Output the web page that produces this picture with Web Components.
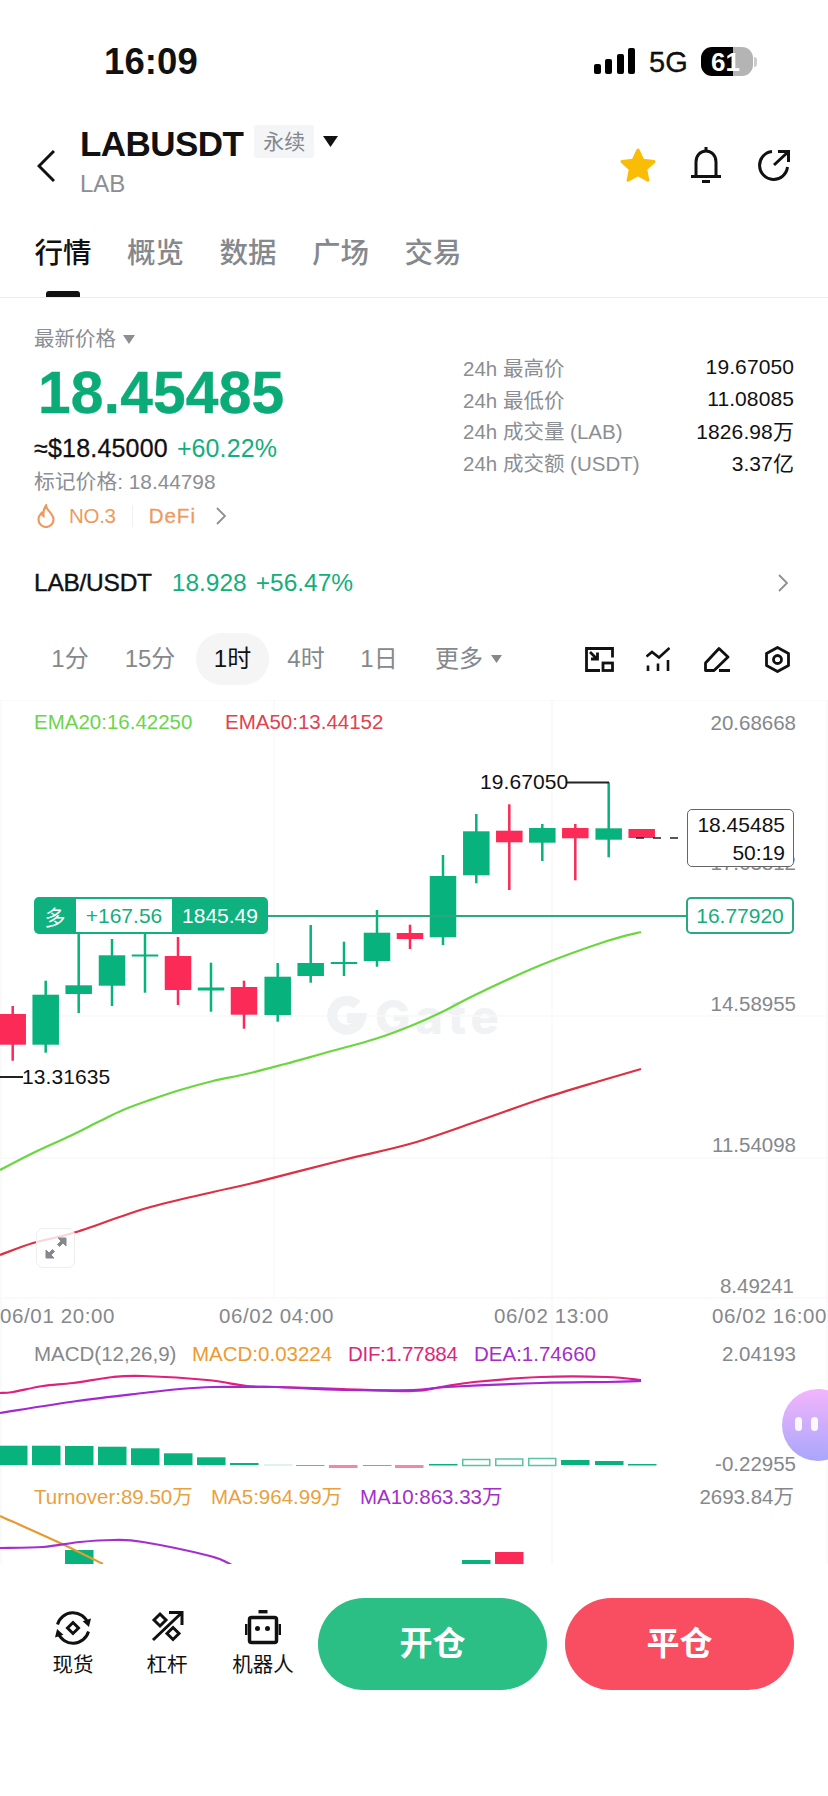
<!DOCTYPE html>
<html lang="zh">
<head>
<meta charset="utf-8">
<title>LABUSDT</title>
<style>
  html, body { margin: 0; padding: 0; background: #fff; }
  body {
    width: 828px;
    height: 1796px;
    overflow: hidden;
    position: relative;
    font-family: "Liberation Sans", "Noto Sans CJK SC", sans-serif;
    color: #111;
  }
</style>
</head>
<body>
  <status-bar time="16:09" network="5G" battery="61"></status-bar>
  <market-header symbol="LABUSDT" base="LAB" kind="永续"></market-header>
  <tab-bar tabs="行情,概览,数据,广场,交易" active="0"></tab-bar>
  <price-panel></price-panel>
  <pair-row pair="LAB/USDT" price="18.928" change="+56.47%"></pair-row>
  <interval-bar></interval-bar>
  <kline-chart></kline-chart>
  <trade-bar></trade-bar>
  <float-bubble></float-bubble>

<script>
// Status bar
class StatusBar extends HTMLElement {
  constructor() {
    super();
    this.attachShadow({ mode: 'open' });
  }
  connectedCallback() {
    const bars = [[0, 64], [11, 59], [23, 54], [34, 48]]
      .map(([x, y]) => `<rect x="${x}" y="${y - 48}" width="7" height="${74 - y}" rx="2"/>`).join('');
    this.shadowRoot.innerHTML = `
      <style>
        :host { display: flex; height: 100px; box-sizing: border-box; padding: 44px 0 0 104px; align-items: flex-start; }
        .time { font-size: 36.5px; line-height: 36px; font-weight: 700; width: 490px; letter-spacing: .1px; }
        .sig { margin-top: 4px; }
        .net { font-size: 29px; line-height: 36px; margin-left: 14px; width: 52px; -webkit-text-stroke: .3px #000; }
        .bat { position: relative; width: 52px; height: 29px; margin-top: 3px; padding-right: 3px; box-sizing: border-box; border-radius: 11px; overflow: hidden;
               background: linear-gradient(90deg, #000 62%, #b4b4b4 62%); color: #fff; font-size: 26px; font-weight: 700;
               line-height: 30px; text-align: center; }
        .cap { width: 3px; height: 10px; margin: 13px 0 0 1px; background: #ccc; border-radius: 0 3px 3px 0; }
      </style>
      <div class="time">${this.getAttribute('time')}</div>
      <svg class="sig" width="41" height="26" viewBox="0 0 41 26" fill="#000">${bars}</svg>
      <div class="net">${this.getAttribute('network')}</div>
      <div class="bat">${this.getAttribute('battery')}</div>
      <div class="cap"></div>`;
  }
}

// Symbol title with actions
class MarketHeader extends HTMLElement {
  constructor() {
    super();
    this.attachShadow({ mode: 'open' });
  }
  connectedCallback() {
    this.shadowRoot.innerHTML = `
      <style>
        :host { display: flex; height: 110px; box-sizing: border-box; padding: 24px 38px 0 37px; }
        svg { display: block; flex: none; }
        .back { margin: 26px 25px 0 0; }
        .name { display: flex; align-items: center; height: 40px; }
        .sym { font-size: 35px; line-height: 40px; font-weight: 700; letter-spacing: -.55px; }
        .tag { margin-left: 11px; width: 60px; height: 33px; margin-top: -6px; background: #f4f5f6; border-radius: 3px; color: #85888c;
               font-size: 21px; line-height: 33px; text-align: center; }
        .tri { margin: -6px 0 0 9px; }
        .base { color: #8b8e93; font-size: 24px; line-height: 30px; margin-top: 5px; }
        .acts { margin-left: auto; display: flex; align-items: center; height: 38px; margin-top: 22px; }
      </style>
      <svg class="back" width="18" height="32" viewBox="0 0 18 32" fill="none" stroke="#111" stroke-width="3"><path d="M17 1 2 16l15 15"/></svg>
      <div>
        <div class="name">
          <span class="sym">${this.getAttribute('symbol')}</span>
          <span class="tag">${this.getAttribute('kind')}</span>
          <svg class="tri" width="15" height="11" viewBox="0 0 15 11" fill="#111"><path d="M0 0h15L7.5 11z"/></svg>
        </div>
        <div class="base">${this.getAttribute('base')}</div>
      </div>
      <div class="acts">
        <svg width="36" height="34" viewBox="0 0 36 34" fill="#fbbc05" stroke="#fbbc05" stroke-width="3" stroke-linejoin="round"><path d="M18 2l4.8 10.2 11.2 1.4-8.3 7.6 2.2 11-9.9-5.5-9.9 5.5 2.2-11L2 13.600l11.200-1.400z"/></svg>
        <svg style="margin-left:35px" width="30" height="36" viewBox="0 0 30 36" fill="none" stroke="#111" stroke-width="3"><path d="M15 0v4M5 29V15C5 8.500 9.500 4 15 4s10 4.500 10 11v14M0 29.500h30M11 34.500h8"/></svg>
        <svg style="margin-left:36px" width="33" height="33" viewBox="0 0 33 33" fill="none" stroke="#111" stroke-width="3"><path d="M15 2.500A14 14 0 1 0 30.500 18M17 16 31 3M21 2.500h10.500V13"/></svg>
      </div>`;
  }
}

// Main tabs
class TabBar extends HTMLElement {
  constructor() {
    super();
    this.attachShadow({ mode: 'open' });
  }
  connectedCallback() {
    const active = Number(this.getAttribute('active'));
    const items = this.getAttribute('tabs').split(',')
      .map((t, i) => `<span class="tab${i === active ? ' on' : ''}">${t}</span>`).join('');
    this.shadowRoot.innerHTML = `
      <style>
        :host { display: flex; gap: 35.500px; height: 88px; box-sizing: border-box; padding: 23px 0 0 34.500px; border-bottom: 1px solid #ececec; }
        .tab { position: relative; font-size: 28.500px; line-height: 40px; height: 64px; color: #85888c; font-weight: 500; }
        .tab.on { color: #111; }
        .tab.on::after { content: ""; position: absolute; left: 11px; width: 34px; height: 6px; bottom: 0; background: #111; border-radius: 3px 3px 0 0; }
      </style>${items}`;
  }
}

// Latest price block and 24h stats
class PricePanel extends HTMLElement {
  constructor() {
    super();
    this.attachShadow({ mode: 'open' });
  }
  connectedCallback() {
    const stats = [
      ['24h 最高价', '19.67050'],
      ['24h 最低价', '11.08085'],
      ['24h 成交量 (LAB)', '1826.98万'],
      ['24h 成交额 (USDT)', '3.37亿'],
    ].map(([k, v]) => `<div class="k">${k}</div><div class="v">${v}</div>`).join('');
    this.shadowRoot.innerHTML = `
      <style>
        :host { display: flex; height: 235px; box-sizing: border-box; padding: 28px 34px 0; }
        .left { width: 429px; flex: none; }
        .grey { color: #8b8e93; font-size: 20.500px; }
        .label { line-height: 26px; display: flex; align-items: center; gap: 7px; }
        .big { font-size: 58.700px; line-height: 60px; margin: 11px 0 0 4px; font-weight: 700; color: #0bab78; letter-spacing: .2px; -webkit-text-stroke: .4px #0bab78; }
        .sub { font-size: 25px; line-height: 30px; margin-top: 10px; display: flex; gap: 9px; }
        .price { letter-spacing: .2px; -webkit-text-stroke: .3px #111; }
        .up { color: #14ae7d; letter-spacing: .1px; }
        .mark { line-height: 24px; margin-top: 7px; font-size: 20.800px; }
        .rank { display: flex; align-items: center; height: 30px; margin-top: 7px; color: #ee9a5e; font-size: 20.500px; }
        .rank svg { flex: none; }
        .no { letter-spacing: -.3px; }
        .fi { letter-spacing: 1px; -webkit-text-stroke: .3px #ee9a5e; }
        .sep { width: 1px; height: 22px; background: #f0f0f0; margin: 0 16px; }
        .stats { flex: 1; display: grid; grid-template-columns: 1fr auto; grid-auto-rows: 31.500px; align-items: center; padding-top: 25.500px; align-content: start; }
        .k { color: #8b8e93; font-size: 20.500px; }
        .v { font-size: 21px; text-align: right; letter-spacing: .1px; }
      </style>
      <div class="left">
        <div class="grey label">最新价格 <svg width="12" height="9" viewBox="0 0 12 9" fill="#8b8e93"><path d="M0 0h12L6 9z"/></svg></div>
        <div class="big">18.45485</div>
        <div class="sub"><span class="price">≈$18.45000</span><span class="up">+60.22%</span></div>
        <div class="grey mark">标记价格: 18.44798</div>
        <div class="rank">
          <svg style="margin:0 14px 0 3px" width="18" height="24" viewBox="0 0 18 24" fill="none" stroke="#ee9a5e" stroke-width="2.200"><path d="M9 1.500c.5 5 7.500 8 7.500 14a7.500 7.500 0 0 1-15 0c0-3 1.500-5 3-6.500.5 1.500 1 2.500 2 3C6 8 7 4.500 9 1.500z"/></svg>
          <span class="no">NO.3</span><span class="sep"></span><span class="fi">DeFi</span>
          <svg style="margin-left:20px" width="10" height="18" viewBox="0 0 10 18" fill="none" stroke="#8b8e93" stroke-width="1.800"><path d="M1 1l8 8-8 8"/></svg>
        </div>
      </div>
      <div class="stats">${stats}</div>`;
  }
}

// Spot pair link row
class PairRow extends HTMLElement {
  constructor() {
    super();
    this.attachShadow({ mode: 'open' });
  }
  connectedCallback() {
    this.shadowRoot.innerHTML = `
      <style>
        :host { display: flex; align-items: center; height: 100px; box-sizing: border-box; padding: 0 40px 0 34px; font-size: 24.500px; }
        .p { font-weight: 500; -webkit-text-stroke: .4px #111; letter-spacing: -.25px; }
        .g { color: #14ae7d; margin-left: 20px; }
        .g + .g { margin-left: 9px; }
        svg { margin-left: auto; }
      </style>
      <span class="p">${this.getAttribute('pair')}</span>
      <span class="g">${this.getAttribute('price')}</span>
      <span class="g">${this.getAttribute('change')}</span>
      <svg width="10" height="18" viewBox="0 0 10 18" fill="none" stroke="#8b8e93" stroke-width="1.800"><path d="M1 1l8 8-8 8"/></svg>`;
  }
}

// Interval selector and chart tools
class IntervalBar extends HTMLElement {
  constructor() {
    super();
    this.attachShadow({ mode: 'open' });
  }
  connectedCallback() {
    this.shadowRoot.innerHTML = `
      <style>
        :host { display: flex; height: 67px; box-sizing: border-box; padding-right: 38px; align-items: flex-start; }
        .i { height: 52px; line-height: 52px; font-size: 24px; color: #85888c; text-align: center; }
        .on { width: 73px; background: #f5f5f5; border-radius: 26px; color: #111; }
        .more { display: flex; align-items: center; gap: 8px; }
        svg { display: block; flex: none; }
        .tools { margin-left: auto; display: flex; align-items: center; height: 52px; }
      </style>
      <span class="i" style="width:70px;margin-left:35px">1分</span>
      <span class="i" style="width:52px;margin-left:19px">15分</span>
      <span class="i on" style="margin-left:20px">1时</span>
      <span class="i" style="width:40px;margin-left:17px">4时</span>
      <span class="i" style="width:38px;margin-left:34px">1日</span>
      <span class="i more" style="margin-left:37px">更多<svg width="11" height="8" viewBox="0 0 11 8" fill="#85888c"><path d="M0 0h11L5.500 8z"/></svg></span>
      <div class="tools">
        <svg width="29" height="25" viewBox="0 0 29 25" fill="none" stroke="#111" stroke-width="2.800"><path d="M15 23.500H1.500V1.500h26v9M5 5l7 7M6 12h6.500V5.500"/><rect x="18" y="16" width="9.500" height="7.500"/></svg>
        <svg style="margin-left:32px" width="24" height="25" viewBox="0 0 24 25" fill="none" stroke="#111" stroke-width="2.600"><path d="M0.500 9.500 6 5l7 5.500L23.500 1M2 18.500v5.500M12 16.500v7.500M22 13v11"/></svg>
        <svg style="margin-left:34px" width="27" height="25" viewBox="0 0 27 25" fill="none" stroke="#111" stroke-width="2.800" stroke-linejoin="round"><path d="M1.500 23.500V16L15 1.500 24 10 10 23.500zM15 23.500h11"/></svg>
        <svg style="margin-left:34px" width="25" height="27" viewBox="0 0 25 27" fill="none" stroke="#111" stroke-width="2.800" stroke-linejoin="round"><path d="M12.500 1.500 23.500 7.500v12l-11 6-11-6v-12z"/><circle cx="12.500" cy="13.500" r="4"/></svg>
      </div>`;
  }
}

// Candles, indicators and axes. The chart is a free canvas, coordinates are page pixels minus TOP.
const TOP = 700;
const GREEN = '#08b27c';
const RED = '#fb2a57';

// [centre x, body top, body bottom, wick top, wick bottom, colour]
const CANDLES = [
  [12.7, 1014, 1044.7, 1006, 1060.7, RED],
  [45.7, 994.7, 1044.7, 980.7, 1052.7, GREEN],
  [78.7, 985.3, 994, 930, 1013, GREEN],
  [112, 955.3, 985.7, 939, 1006, GREEN],
  [145, 954.5, 956.5, 930, 992.7, GREEN],
  [178, 956, 990, 937, 1005, RED],
  [211, 987.5, 990.5, 962.7, 1011.7, GREEN],
  [244, 987, 1014.7, 980.7, 1028.7, RED],
  [277.7, 976.7, 1015, 963, 1021.7, GREEN],
  [310.7, 963, 976, 925, 982.7, GREEN],
  [344, 962, 964, 941.7, 976, GREEN],
  [377, 932.7, 961, 910, 966.7, GREEN],
  [410, 933, 939, 924.7, 949, RED],
  [443, 876, 937.3, 855, 945, GREEN],
  [476.3, 831.3, 875.3, 814, 883.3, GREEN],
  [509.3, 830.7, 842.3, 804.3, 890, RED],
  [542.3, 828, 842.7, 824, 861, GREEN],
  [575.3, 828, 838.3, 824, 880.3, RED],
  [608.7, 828.3, 839.7, 782.3, 857.3, GREEN],
  [641.7, 829, 838, 829, 838, RED],
];

const EMA20 = [[0,1170],[33,1153],[70,1136],[100,1121],[123,1110],[147,1101],[180,1090],[213,1081],[246,1074],[285,1064],[321,1054],[375,1039],[413,1025],[444,1011],[477,994],[541,965],[607,941],[641,932]];
const EMA50 = [[0,1255],[33,1243],[73,1233],[147,1208],[213,1192],[253,1183],[343,1160],[413,1143],[481,1120],[541,1099],[600,1081],[641,1069]];
const DIF = [[0,1393],[13,1392],[43,1386],[73,1383],[113,1377],[143,1376],[207,1380],[247,1386],[277,1387],[343,1389],[413,1391],[441,1387],[474,1382],[541,1377],[607,1377],[641,1380]];
const DEA = [[0,1413],[77,1401],[143,1393],[180,1389],[213,1387],[247,1387],[277,1387],[343,1390],[413,1390],[447,1387],[541,1383],[607,1382],[641,1381]];
const VOL_MA5 = [[0,1516],[60,1543],[103,1564]];
const VOL_MA10 = [[0,1548],[43,1547],[80,1542],[113,1540],[143,1542],[210,1556],[232,1565]];

// [x, top, bottom, style] s solid, h hollow
const MACD_BARS = [
  [-1, 1445.7, 1465, 's'], [32, 1445.7, 1465, 's'], [65, 1446, 1465, 's'], [98, 1446.7, 1465, 's'],
  [131, 1448.3, 1465, 's'], [164, 1453.3, 1465, 's'], [197, 1457.3, 1465, 's'], [230, 1463, 1465, 's'],
  [264, 1464.5, 1465.5, 'pg'], [296, 1465, 1466, 'r'], [329, 1465, 1468, 'pr'], [363, 1465, 1466, 'r'],
  [395, 1465, 1468, 'pr'], [429, 1464, 1465.5, 's'], [462, 1459.5, 1465.5, 'h'], [495, 1459, 1465.5, 'h'],
  [528, 1458.5, 1465.5, 'h'], [561, 1460, 1465, 's'], [595, 1461, 1465, 's'], [628, 1464, 1465.5, 's'],
];

// Catmull-Rom through the points, so the averages do not show corners
function smoothPath(pts) {
  let d = `M${pts[0][0]} ${pts[0][1]}`;
  for (let i = 0; i < pts.length - 1; i++) {
    const a = pts[i - 1] || pts[i], b = pts[i], c = pts[i + 1], e = pts[i + 2] || c;
    const c1 = [b[0] + (c[0] - a[0]) / 6, b[1] + (c[1] - a[1]) / 6];
    const c2 = [c[0] - (e[0] - b[0]) / 6, c[1] - (e[1] - b[1]) / 6];
    d += `C${c1[0].toFixed(1)} ${c1[1].toFixed(1)} ${c2[0].toFixed(1)} ${c2[1].toFixed(1)} ${c[0]} ${c[1]}`;
  }
  return d;
}

class KlineChart extends HTMLElement {
  constructor() {
    super();
    this.attachShadow({ mode: 'open' });
  }
  connectedCallback() {
    this.shadowRoot.innerHTML = `
      <style>
        :host { display: block; position: relative; height: 864px; overflow: hidden; font-size: 20.500px; }
        svg { position: absolute; inset: 0; }
        span { position: absolute; white-space: nowrap; line-height: 24px; transform: translateY(-50%); }
        .g { color: #85888c; }
        .t { letter-spacing: .62px; }
        .h { font-size: 21px; letter-spacing: .1px; }
        .wm { color: #f1f2f4; font-family: Inter, "Liberation Sans", sans-serif; font-size: 47px; font-weight: 800; letter-spacing: 5px; line-height: 50px; }
        .now, .pos-box { position: absolute; box-sizing: border-box; background: #fff; text-align: right; }
        .now { left: 687px; top: 109px; width: 107px; height: 58px; border: 1px solid #666; border-radius: 5px; padding: 1px 8px 0 0; font-size: 21px; }
        .now div { line-height: 28px; }
        .pos { position: absolute; left: 34px; top: 197px; width: 234px; height: 37px; background: #0fb27f; border-radius: 5px; color: #fff; display: flex; align-items: center; font-size: 21px; }
        .pos b { font-weight: 400; width: 42px; text-align: center; }
        .pos i { font-style: normal; width: 96px; height: 33px; line-height: 33px; background: #fff; color: #14ae7d; text-align: center; }
        .pos em { font-style: normal; flex: 1; text-align: center; }
        .pos-box { left: 686px; top: 197px; width: 108px; height: 37px; border: 2px solid #2aa884; border-radius: 5px; color: #14ae7d; line-height: 33px; text-align: center; font-size: 21px; }
        .exp { position: absolute; left: 36px; top: 528px; width: 39px; height: 40px; box-sizing: border-box; border: 1px solid #eee; border-radius: 7px; background: rgba(255,255,255,.8); }
        .exp svg { inset: 8px; }
      </style>
      <span class="wm" style="left:375px;top:317px">Gate</span>
      ${this.chartSvg()}
      ${this.text('EMA20:16.42250', 34, 722, '#6bd54c')}
      ${this.text('EMA50:13.44152', 225, 722, '#e0424e')}
      ${this.axis('20.68668', 723)}
      ${this.axis('17.63812', 863)}
      ${this.axis('14.58955', 1004)}
      ${this.axis('11.54098', 1145)}
      ${this.axis('8.49241', 1286, 794)}
      ${this.text('19.67050', 480, 782, '#111', 'h')}
      ${this.text('13.31635', 22, 1077, '#111', 'h')}
      ${this.text('06/01 20:00', 0, 1316, '#85888c', 't')}
      ${this.text('06/02 04:00', 219, 1316, '#85888c', 't')}
      ${this.text('06/02 13:00', 494, 1316, '#85888c', 't')}
      ${this.text('06/02 16:00', 712, 1316, '#85888c', 't')}
      ${this.text('MACD(12,26,9)', 34, 1354, '#85888c')}
      ${this.text('MACD:0.03224', 192, 1354, '#ef9a2f')}
      <span style="left:348px;top:654px;color:#d9277a;letter-spacing:-.3px">DIF:1.77884</span>
      ${this.text('DEA:1.74660', 474, 1354, '#a42ec9')}
      ${this.axis('2.04193', 1354)}
      ${this.axis('-0.22955', 1464)}
      ${this.text('Turnover:89.50万', 34, 1497, '#e9a13f')}
      ${this.text('MA5:964.99万', 211, 1497, '#e9a13f')}
      ${this.text('MA10:863.33万', 360, 1497, '#a42ec9')}
      ${this.axis('2693.84万', 1497, 794)}
      <div class="now"><div>18.45485</div><div>50:19</div></div>
      <div class="pos"><b>多</b><i>+167.56</i><em>1845.49</em></div>
      <div class="pos-box">16.77920</div>
      <div class="exp">
        <svg width="22" height="22" viewBox="0 0 22 22" fill="#85888c" stroke="#85888c"><path d="M13 1h8v8l-3-3-3.500 3.500-2-2L16 4zM9 21H1v-8l3 3 3.500-3.500 2 2L6 18z"/></svg>
      </div>`;
  }

  text(t, x, y, color, cls = '') {
    return `<span class="${cls}" style="left:${x}px;top:${y - TOP}px;color:${color}">${t}</span>`;
  }

  axis(t, y, right = 796) {
    return `<span class="g" style="right:${828 - right}px;top:${y - TOP}px">${t}</span>`;
  }

  chartSvg() {
    const candles = CANDLES.map(([x, t, b, wt, wb, c]) => `
      <rect x="${x - 1.25}" y="${wt}" width="2.500" height="${wb - wt}" fill="${c}"/>
      <rect x="${x - 13.25}" y="${t}" width="26.500" height="${b - t}" fill="${c}"/>`).join('');
    const bars = MACD_BARS.map(([x, t, b, s]) => {
      if (s === 'h') {
        return `<rect x="${x + .75}" y="${t}" width="27" height="${b - t}" fill="#fff" stroke="#59c4a0" stroke-width="1.500"/>`;
      }
      const fill = { s: GREEN, r: '#f0709a', pr: '#f287a8', pg: '#bfe8da' }[s];
      return `<rect x="${x}" y="${t}" width="28.500" height="${b - t}" fill="${fill}"/>`;
    }).join('');
    const line = (pts, c) => `<path d="${smoothPath(pts)}" fill="none" stroke="${c}" stroke-width="2.200" stroke-linejoin="round"/>`;
    const grid = [700, 1016, 1158, 1298].map(y => `<path d="M0 ${y}H828" stroke="#f9f9f9" stroke-width="1.500"/>`).join('');
    return `
      <svg width="828" height="864" viewBox="0 ${TOP} 828 864">
        ${grid}
        <path d="M1 700V1564M274 700V1298M552 700V1564M827 700V1564" stroke="#f9f9f9" stroke-width="1.500"/>
        <path d="M357 1005a14.500 14.500 0 1 0 4 13h-14" fill="none" stroke="#f1f2f4" stroke-width="10"/>
        ${candles}
        <path d="M268 916H686" stroke="#2aa884" stroke-width="2.200"/>
        <path d="M636 838h48" stroke="#222" stroke-width="1.500" stroke-dasharray="8 9"/>
        <path d="M567 782.500h42M0 1077h23" stroke="#222" stroke-width="1.800"/>
        ${line(EMA20, '#6bd63f')}
        ${line(EMA50, '#dd3044')}
        ${bars}
        ${line(DIF, '#e0207c')}
        ${line(DEA, '#a228d4')}
        <rect x="65" y="1550" width="28.500" height="14" fill="${GREEN}"/>
        <rect x="462" y="1560" width="28.500" height="4" fill="${GREEN}"/>
        <rect x="495" y="1552" width="28.500" height="12" fill="${RED}"/>
        ${line(VOL_MA5, '#e79a2e')}
        ${line(VOL_MA10, '#a32fd0')}
      </svg>`;
  }
}

// Bottom shortcuts and order buttons
class TradeBar extends HTMLElement {
  constructor() {
    super();
    this.attachShadow({ mode: 'open' });
  }
  connectedCallback() {
    this.shadowRoot.innerHTML = `
      <style>
        :host { display: flex; box-sizing: border-box; height: 232px; padding: 34px 34px 0 26px; align-items: flex-start; }
        .tool { width: 94px; display: flex; flex-direction: column; align-items: center; font-size: 20.500px; line-height: 24px; }
        .ic { height: 43px; padding-top: 12px; display: flex; align-items: flex-start; }
        .btn { width: 229px; height: 92px; border-radius: 46px; color: #fff; font-size: 33px; font-weight: 700; line-height: 92px; text-align: center; }
      </style>
      <div class="tool">
        <div class="ic"><svg width="36" height="36" viewBox="0 0 36 36" fill="none" stroke="#111" stroke-width="3"><path d="M2.500 14.500A16 16 0 0 1 33 13.500M33.500 21.500A16 16 0 0 1 3 22.500"/><path d="M18 12.500 23.500 18 18 23.500 12.500 18z"/><path d="M29 11.500l4.500 4 1.500-6z" fill="#111" stroke-width="1.500"/><path d="M7 24.500l-4.500-4-1.500 6z" fill="#111" stroke-width="1.500"/></svg></div>
        现货
      </div>
      <div class="tool">
        <div class="ic"><svg width="33" height="33" viewBox="0 0 33 33" fill="none" stroke="#111" stroke-width="3"><path d="M2 30 31 2.500M18 2.500h13V15"/><path d="M9 4l6 6-6 6-6-6zM22 17.500l6 6-6 6-6-6z"/></svg></div>
        杠杆
      </div>
      <div class="tool" style="margin-left:2px">
        <div class="ic"><svg width="36" height="35" viewBox="0 0 36 35" fill="none" stroke="#111"><rect x="4.500" y="7.500" width="27" height="25" rx="2" stroke-width="3.500"/><path d="M13.500 1.700h9" stroke-width="3.400"/><path d="M1.200 14v11M34.800 14v11" stroke-width="2.400"/><circle cx="12.500" cy="18.500" r="2.500" fill="#111" stroke="none"/><circle cx="22.500" cy="18.500" r="2.500" fill="#111" stroke="none"/></svg></div>
        机器人
      </div>
      <div class="btn" style="margin-left:8px;background:#2bbf86">开仓</div>
      <div class="btn" style="margin-left:18px;background:#f94e62">平仓</div>`;
  }
}

// Assistant bubble floating on the right edge
class FloatBubble extends HTMLElement {
  constructor() {
    super();
    this.attachShadow({ mode: 'open' });
  }
  connectedCallback() {
    this.shadowRoot.innerHTML = `
      <style>
        :host { display: block; position: absolute; left: 782px; top: 1389px; width: 46px; height: 72px; overflow: hidden; }
        .b { width: 72px; height: 72px; border-radius: 50%; background: linear-gradient(180deg, #f3b5fb, #a8a6fb); }
        i { position: absolute; top: 28px; width: 7px; height: 14px; border-radius: 4px; background: #fff; opacity: .92; }
      </style>
      <div class="b"></div><i style="left:13px"></i><i style="left:29px"></i>`;
  }
}

customElements.define('status-bar', StatusBar);
customElements.define('market-header', MarketHeader);
customElements.define('tab-bar', TabBar);
customElements.define('price-panel', PricePanel);
customElements.define('pair-row', PairRow);
customElements.define('interval-bar', IntervalBar);
customElements.define('kline-chart', KlineChart);
customElements.define('trade-bar', TradeBar);
customElements.define('float-bubble', FloatBubble);
</script>
</body>
</html>
